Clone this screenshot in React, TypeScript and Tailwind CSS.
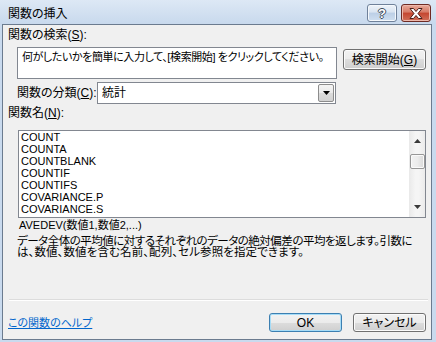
import { useState } from "react";

const functionNames = [
  "COUNT",
  "COUNTA",
  "COUNTBLANK",
  "COUNTIF",
  "COUNTIFS",
  "COVARIANCE.P",
  "COVARIANCE.S",
];

const ui =
  "[font-family:'Liberation_Sans','Noto_Sans_CJK_JP',sans-serif] [font-feature-settings:'palt'] text-[12px] leading-[12px] text-black";

// win7 style push button
const Button = ({
  children,
  primary,
  className,
}: {
  children: React.ReactNode;
  primary?: boolean;
  className?: string;
}) => (
  <button
    className={`${className} flex items-center justify-center rounded-[3px] border bg-[linear-gradient(#f2f2f2_0%,#ebebeb_50%,#dddddd_50%,#cfcfcf_100%)] ${
      primary
        ? "border-[#3c7fb1] shadow-[inset_0_0_0_1px_#a6dcf7]"
        : "border-[#707070] shadow-[inset_0_0_0_1px_#fbfbfb]"
    }`}
  >
    {children}
  </button>
);

const App = () => {
  const [selected] = useState<number>(-1);

  return (
    <div
      className={`${ui} flex h-[342px] w-[436px] flex-col bg-[#c9daee] pl-[2px] pr-[4px] pb-[2px]`}
    >
      {/* title bar */}
      <div className="flex h-[24px] items-start bg-[linear-gradient(#dde8f5,#c8d9ed)] -ml-[2px] -mr-[4px] pl-[8px]">
        <span className="mt-[8px] text-[12px] leading-[12px]">関数の挿入</span>
        <div className="ml-auto mr-[5px] mt-[4px] flex gap-[4px]">
          <div className="flex h-[18px] w-[30px] items-center justify-center rounded-[3px] border border-[#6f819a] bg-[linear-gradient(#eef3f9_0%,#d9e4f1_45%,#bccfe6_50%,#cfdff0_100%)] shadow-[inset_0_0_0_1px_#f4f8fc]">
            <span className="font-bold text-[13px] leading-[13px] text-white [text-shadow:1px_0_0_#3f4b5b,-1px_0_0_#3f4b5b,0_1px_0_#3f4b5b,0_-1px_0_#3f4b5b]">
              ?
            </span>
          </div>
          <div className="flex h-[18px] w-[30px] items-center justify-center rounded-[3px] border border-[#6e2b24] bg-[linear-gradient(#e8a99a_0%,#d67a66_45%,#c4452f_50%,#d0705a_100%)] shadow-[inset_0_0_0_1px_#eeb9ac]">
            <svg width="14" height="11" viewBox="0 0 14 11">
              <path
                d="M1 0.5 H4.5 L7 3.5 L9.5 0.5 H13 L9 5.5 L13 10.5 H9.5 L7 7.5 L4.5 10.5 H1 L5 5.5 Z"
                fill="#ffffff"
                stroke="#4a1f1a"
                strokeWidth="1"
              />
            </svg>
          </div>
        </div>
      </div>

      {/* client area */}
      <div className="flex flex-1 flex-col border border-[#6b7b8f] bg-[#f0f0f0] pl-[5px] pr-[5px] pb-[7px]">
        <div className="mt-[4px] h-[12px]">
          関数の検索(<u>S</u>):
        </div>

        <div className="mt-[6px] flex items-start">
          <div className="ml-[9px] h-[32px] w-[320px] whitespace-nowrap border border-[#828790] bg-white pl-[4px] pt-[3px] text-[11px] tracking-[-0.4px]">
            何がしたいかを簡単に入力して、[検索開始] をクリックしてください。
          </div>
          <Button className="ml-[6px] mt-[2px] h-[21px] w-[83px]">
            検索開始(<u>G</u>)
          </Button>
        </div>

        <div className="mt-[3px] ml-[9px] flex items-center">
          <span className="w-[80px]">
            関数の分類(<u>C</u>):
          </span>
          <div className="flex h-[22px] w-[239px] items-center border border-[#828790] bg-white pl-[4px]">
            <span>統計</span>
            <div className="ml-auto mr-[1px] flex h-[18px] w-[16px] items-center justify-center rounded-[2px] border border-[#8c8c8c] bg-[linear-gradient(#f4f4f4_0%,#eaeaea_50%,#dcdcdc_50%,#d2d2d2_100%)]">
              <svg width="7" height="4" viewBox="0 0 7 4">
                <path d="M0 0 H7 L3.5 4 Z" fill="#000" />
              </svg>
            </div>
          </div>
        </div>

        <div className="mt-[3px] h-[12px]">
          関数名(<u>N</u>):
        </div>

        <div className="ml-[10px] mt-[11px] flex h-[88px] w-[408px] border border-[#828790] bg-white">
          <ul className="flex-1 pl-[2px] text-[11px] leading-[12px]">
            {functionNames.map((name, i) => (
              <li
                key={name}
                className={`h-[12px] ${i === selected ? "bg-[#3399ff] text-white" : ""}`}
              >
                {name}
              </li>
            ))}
          </ul>
          {/* scrollbar */}
          <div className="flex w-[16px] flex-col items-center bg-[linear-gradient(90deg,#e9e9e9,#f5f5f5_40%,#f5f5f5_60%,#ebebeb)]">
            <div className="flex h-[17px] items-center">
              <svg width="7" height="4" viewBox="0 0 7 4" className="mt-[3px]">
                <path d="M3.5 0 L7 4 H0 Z" fill="#3a3a3a" />
              </svg>
            </div>
            <div className="mt-[6px] h-[15px] w-[15px] rounded-[2px] border border-[#979797] bg-[linear-gradient(90deg,#f2f2f2,#ececec_50%,#d8d8d8)] shadow-[inset_0_0_0_1px_#fafafa]" />
            <div className="mt-auto flex h-[17px] items-center">
              <svg width="7" height="4" viewBox="0 0 7 4" className="mb-[3px]">
                <path d="M0 0 H7 L3.5 4 Z" fill="#3a3a3a" />
              </svg>
            </div>
          </div>
        </div>

        <div className="ml-[11px] mt-[1px] h-[12px] text-[11px]">AVEDEV(数値1,数値2,...)</div>
        <div className="ml-[9px] mt-[5px] whitespace-nowrap text-[11.5px] leading-[11px]">
          <div className="tracking-[-0.5px]">
            データ全体の平均値に対するそれぞれのデータの絶対偏差の平均を返します。引数に
          </div>
          <div className="tracking-[0.1px]">
            は、数値、数値を含む名前、配列、セル参照を指定できます。
          </div>
        </div>

        <div className="mt-auto ml-[1px] w-[419px] border-t border-b border-t-[#dcdcdc] border-b-white" />
        <div className="mt-[12px] flex items-center">
          <a href="#" className="text-[11px] text-[#0066cc] underline">
            この関数のヘルプ
          </a>
          <Button primary className="ml-auto h-[19px] w-[73px]">
            OK
          </Button>
          <Button className="ml-[11px] h-[19px] w-[73px]">キャンセル</Button>
        </div>
      </div>
    </div>
  );
};

export default App;
